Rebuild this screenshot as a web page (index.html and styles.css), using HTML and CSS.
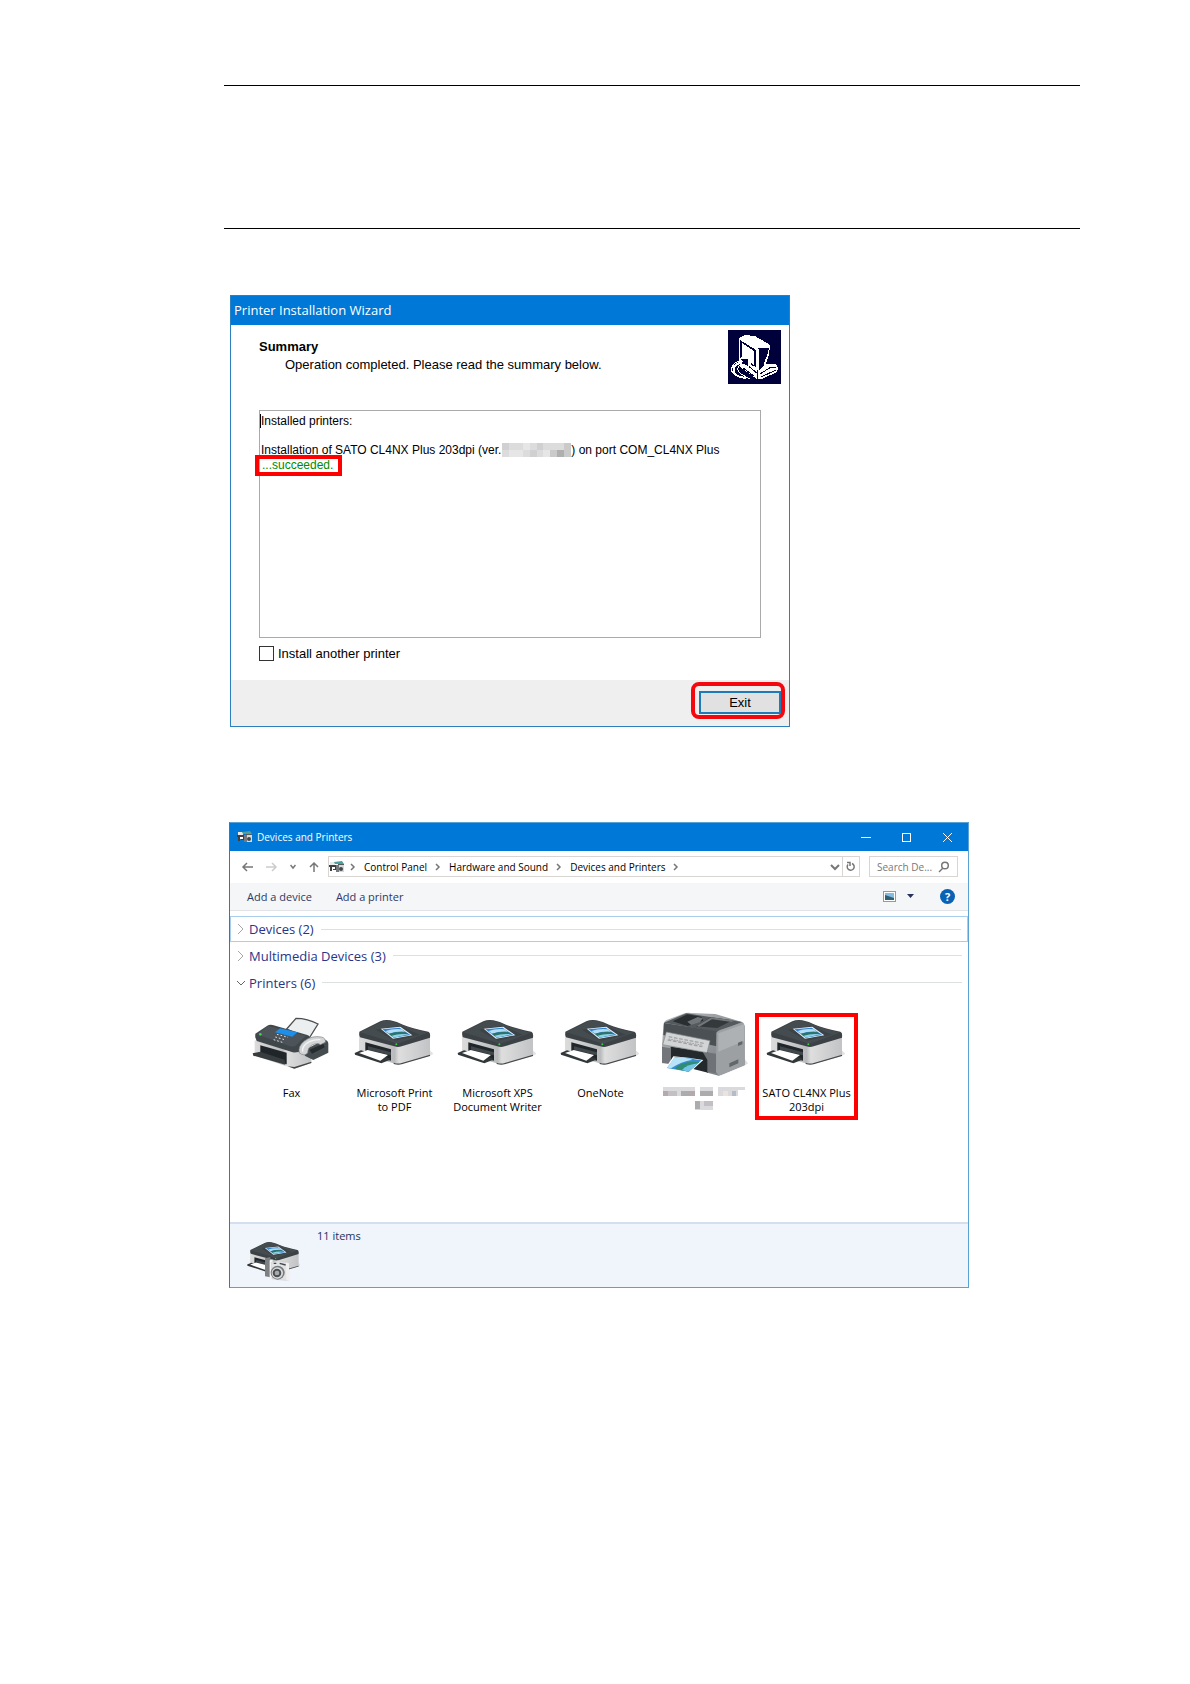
FILE: index.html
```html
<!DOCTYPE html>
<html lang="en">
  <head>
    <meta charset="utf-8">
    <title>Printer Installation</title>
    <link rel="stylesheet" href="styles.css">
  </head>
  <body>
    <!-- shared drawings -->
    <svg class="sprites" width="0" height="0" aria-hidden="true">
      <defs>
        <linearGradient id="side" x1="0" x2="1" y1="0" y2="0">
          <stop offset="0" stop-color="#dcdcdc" />
          <stop offset="0.5" stop-color="#b9bbbc" />
          <stop offset="0.56" stop-color="#dedede" />
          <stop offset="1" stop-color="#c2c3c5" />
        </linearGradient>
        <linearGradient id="metal" x1="0" x2="1" y1="0" y2="1">
          <stop offset="0" stop-color="#b5b8bb" />
          <stop offset="1" stop-color="#73777b" />
        </linearGradient>
      </defs>
      <symbol id="printer" viewBox="380 50 240 150">
        <path d="M520 192L612 166L621 160L610 150Z" fill="#e2e2e2" />
        <path d="M398 106L508 136L611 108V166L526 190Q515 194 502 189L398 160Z" fill="url(#side)" />
        <path d="M502 187Q515 192 526 188L611 163V167L526 192Q515 195 502 191Z" fill="#45494c" />
        <path d="M399 94L462 63Q475 57 492 60Q512 64 530 73Q555 83 606 94Q613 96 611 112L526 138Q515 142 504 138L401 111Q397 104 399 94Z" fill="#3b4145" />
        <path d="M401 96L464 65Q476 60 492 62Q511 66 529 75Q554 85 604 97L521 128Q514 130 506 128Z" fill="#454c50" />
        <path d="M448 88L520 76L580 103L506 121Z" fill="#3c4246" />
        <path d="M417 126L494 147V181L417 160Z" fill="#20262a" />
        <path d="M425 138L494 156V165L425 148Z" fill="#41484c" />
        <path d="M385 158L404 150L490 174V179L465 189L386 163Z" fill="#32373a" />
        <path d="M398 158L424 149L485 164L462 181Z" fill="#fff" />
        <path d="M463 85L522 79L558 105L500 115Z" fill="#e8f3fa" />
        <path d="M468 87L520 82L552 104L502 112Z" fill="#2f83cf" />
        <path d="M478 92Q500 84 526 87L536 94Q510 92 488 100Z" fill="#b4dcf5" />
        <path d="M488 100Q512 92 537 96L547 102L502 112Z" fill="#2d7466" />
        <path d="M496 106Q520 98 549 102L502 112Z" fill="#8ed0ef" />
        <circle cx="510" cy="132" r="3" fill="#39c840" />
      </symbol>
      <symbol id="devices" viewBox="0 0 16 12">
        <path d="M1 1H6V4H1Z" fill="#e8e8e8" />
        <path d="M5 1L13 0L15 3H6Z" fill="#4d9e9e" />
        <path d="M0 4H7V9H4V6H3V10H1V6H0Z" fill="#3d4043" />
        <path d="M3 6H6V8H3Z" fill="#fff" />
        <path d="M7 4H10V11H7Z" fill="#75797c" />
        <path d="M10 4H15V11H10Z" fill="#d8d8d8" />
        <circle cx="12" cy="8" r="2" fill="#45484b" />
        <path d="M9 3H15V4H9Z" fill="#565a5c" />
      </symbol>
      <symbol id="chevron" viewBox="0 0 8 8">
        <path d="M2 1L5 4L2 7" fill="none" stroke="currentColor" stroke-width="1.500" />
      </symbol>
    </svg>

    <main class="page">
      <div class="note"></div>

      <section class="wizard" aria-label="Printer Installation Wizard">
        <h1 class="wizard-title">Printer Installation Wizard</h1>
        <div class="wizard-body">
          <header class="summary">
            <div>
              <h2>Summary</h2>
              <p>Operation completed. Please read the summary below.</p>
            </div>
            <svg class="setup-icon" viewBox="0 0 53 54" shape-rendering="crispEdges">
              <rect width="53" height="54" fill="#00003a" />
              <path d="M11 8L17 5L27 6L42 15L41 25L38 34L48 34L50 38L49 42L34 49L29 49L12 37L11 28Z" fill="#fff" />
              <path d="M30 18L41 17L40 24L36 35L31 40Z" fill="#00003a" />
              <path d="M12 10L28 20V37L23 35V26H14L12 28Z" fill="#00003a" />
              <path d="M14 13L26 21V35L23 33V26H14Z" fill="#fff" />
              <path d="M32 44L43 37L48 37M33 47L48 40M29 40V49M15 38L26 46M18 34L30 44" stroke="#00003a" stroke-width="1" fill="none" />
              <path d="M30 18L42 17M30 19V40M36 35L40 24" stroke="#fff" fill="none" />
              <path d="M20 48C6 48 0 41 6 34Q9 31 14 31L11 28H20V37L16 34C9 35 8 40 13 44Z" fill="#00003a" stroke="#fff" stroke-width="1" />
              <path d="M18 48C8 47 4 43 6 37Q8 33 14 33" stroke="#fff" stroke-width="2" fill="none" />
            </svg>
          </header>
          <div class="log">
            <p><span class="caret">Installed printers:</span></p>
            <p class="log-entry">
              Installation of SATO CL4NX Plus 203dpi (ver.
              <svg width="69" height="14" viewBox="0 0 10 2" preserveAspectRatio="none" shape-rendering="crispEdges">
                <path d="M0 0H10V2H0Z" fill="#dcdcdc" />
                <path d="M0 0H1V1H0ZM4 1H5V2H4ZM5 0H6V1H5Z" fill="#d0d0d3" />
                <path d="M1 1H3V2H1ZM6 1H7V2H6ZM3 0H4V1H3Z" fill="#e6e6e6" />
                <path d="M8 1H9V2H8Z" fill="#b0afb0" />
                <path d="M9 0H10V2H9ZM7 1H8V2H7Z" fill="#cbcacb" />
              </svg>
              ) on port COM_CL4NX Plus
            </p>
            <p class="result"><span class="callout">...succeeded.</span></p>
          </div>
          <label class="again"><input type="checkbox"> Install another printer</label>
        </div>
        <footer class="wizard-footer">
          <span class="exit-callout"><button type="button" class="exit">Exit</button></span>
        </footer>
      </section>

      <section class="explorer" aria-label="Devices and Printers">
        <header class="titlebar">
          <svg width="16" height="12"><use href="#devices" /></svg>
          <h1>Devices and Printers</h1>
          <div class="window-buttons">
            <button type="button" aria-label="Minimize">
              <svg width="11" height="11"><path d="M1 5.500H11" stroke="#fff" /></svg>
            </button>
            <button type="button" aria-label="Maximize">
              <svg width="11" height="11"><rect x="1.500" y="1.500" width="8" height="8" fill="none" stroke="#fff" /></svg>
            </button>
            <button type="button" aria-label="Close">
              <svg width="11" height="11"><path d="M1 1L10 10M10 1L1 10" stroke="#fff" /></svg>
            </button>
          </div>
        </header>

        <nav class="navbar">
          <div class="history">
            <button type="button" aria-label="Back">
              <svg width="12" height="10"><path d="M12 5H2M6 1L2 5L6 9" fill="none" stroke="#777" stroke-width="1.500" /></svg>
            </button>
            <button type="button" aria-label="Forward">
              <svg width="12" height="10"><path d="M0 5H10M6 1L10 5L6 9" fill="none" stroke="#ccc" stroke-width="1.500" /></svg>
            </button>
            <button type="button" aria-label="Recent locations">
              <svg width="6" height="10"><path d="M0.500 3L3 6L5.500 3" fill="none" stroke="#777" stroke-width="1.500" /></svg>
            </button>
            <button type="button" aria-label="Up">
              <svg width="10" height="11"><path d="M5 11V2M1 6L5 2L9 6" fill="none" stroke="#777" stroke-width="1.500" /></svg>
            </button>
          </div>
          <div class="address">
            <svg class="place" width="16" height="12"><use href="#devices" /></svg>
            <svg class="sep" width="8" height="8"><use href="#chevron" /></svg>
            <a href="#">Control Panel</a>
            <svg class="sep" width="8" height="8"><use href="#chevron" /></svg>
            <a href="#">Hardware and Sound</a>
            <svg class="sep" width="8" height="8"><use href="#chevron" /></svg>
            <a href="#">Devices and Printers</a>
            <svg class="sep" width="8" height="8"><use href="#chevron" /></svg>
            <button type="button" class="drop" aria-label="Previous locations">
              <svg width="10" height="8"><path d="M1 2L5 6L9 2" fill="none" stroke="#777" stroke-width="2" /></svg>
            </button>
            <button type="button" class="refresh" aria-label="Refresh">
              <svg width="10" height="11"><path d="M6 2.500A3.500 3.500 0 1 1 2 3.500M1 1.500H4V5" fill="none" stroke="#777" stroke-width="1.500" /></svg>
            </button>
          </div>
          <div class="search">
            <input type="text" placeholder="Search De..." aria-label="Search">
            <svg width="12" height="12"><circle cx="7" cy="4.500" r="3.300" fill="none" stroke="#777" stroke-width="1.500" /><path d="M5 7L1 11" stroke="#777" stroke-width="1.500" /></svg>
          </div>
        </nav>

        <div class="toolbar">
          <button type="button">Add a device</button>
          <button type="button">Add a printer</button>
          <div class="toolbar-right">
            <button type="button" aria-label="Change view">
              <svg width="13" height="11"><rect x="0.500" y="0.500" width="12" height="10" fill="#fff" stroke="#999" /><path d="M2 2H11V7H2Z" fill="#83bce2" /><path d="M2 4L11 7V9H2Z" fill="#2f6073" /></svg>
            </button>
            <button type="button" aria-label="More view options">
              <svg width="8" height="5"><path d="M1 0H8L4.500 4Z" fill="#26315e" /></svg>
            </button>
            <button type="button" class="help" aria-label="Help">?</button>
          </div>
        </div>

        <div class="groups">
          <button type="button" class="group selected">
            <svg width="8" height="12"><path d="M1 1L6 6L1 11" fill="none" stroke="#a6a6a6" /></svg>
            <span>Devices (2)</span>
          </button>
          <button type="button" class="group">
            <svg width="8" height="12"><path d="M1 1L6 6L1 11" fill="none" stroke="#a6a6a6" /></svg>
            <span>Multimedia Devices (3)</span>
          </button>
          <button type="button" class="group">
            <svg width="8" height="12"><path d="M0 4L4 8L8 4" fill="none" stroke="#666" /></svg>
            <span>Printers (6)</span>
          </button>

          <ul class="printers">
            <li>
              <a href="#">
                <svg class="fax" viewBox="78 40 240 174">
                  <path d="M182 88L210 56Q245 56 276 73L248 118Z" fill="#eceff0" stroke="#4b4f52" stroke-width="4" />
                  <path d="M86 122L200 154L236 140L256 160V190L205 207L86 168Z" fill="url(#side)" />
                  <path d="M88 102L124 78Q130 74 140 76L244 106Q255 110 250 120L232 150Q215 160 200 158L92 124Q85 112 88 102Z" fill="#40474b" />
                  <path d="M93 104L127 79L240 108L208 139Q200 142 190 139Z" fill="#4d5459" />
                  <path d="M103 137L182 159V194L103 172Z" fill="#1f2528" />
                  <path d="M80 161L103 156L176 180L178 195L160 190L82 168Z" fill="#373c3f" />
                  <path d="M185 200L205 207L256 190V186L205 202Z" fill="#444" />
                  <path d="M162 86L214 98L199 111L147 98Z" fill="#1d8fe8" />
                  <path d="M153 104L186 113M148 112L179 121M143 120L172 129" stroke="#e2e2e2" stroke-width="3" stroke-dasharray="5 6" />
                  <path d="M246 146L294 120Q306 120 307 132V159L262 181L236 168Z" fill="#454c50" />
                  <path d="M250 150L292 132L296 143L258 162Z" fill="#252b2e" />
                  <path d="M220 160Q215 140 235 124Q258 107 286 112Q300 115 298 128L283 135Q275 128 258 136Q245 144 245 160Q235 171 220 160Z" fill="#d2d5d6" stroke="#7d8183" stroke-width="2" />
                  <path d="M230 156Q227 138 250 126Q265 119 283 120" fill="none" stroke="#f4f4f4" stroke-width="4" />
                  <circle cx="103" cy="104" r="4" fill="#39d840" />
                </svg>
                <span>Fax</span>
              </a>
            </li>
            <li>
              <a href="#">
                <svg class="art"><use href="#printer" /></svg>
                <span>Microsoft Print<br>to PDF</span>
              </a>
            </li>
            <li>
              <a href="#">
                <svg class="art"><use href="#printer" /></svg>
                <span>Microsoft XPS<br>Document Writer</span>
              </a>
            </li>
            <li>
              <a href="#">
                <svg class="art"><use href="#printer" /></svg>
                <span>OneNote</span>
              </a>
            </li>
            <li>
              <a href="#" aria-label="Printer">
                <svg class="office" viewBox="66 33 264 198">
                  <path d="M245 228L318 198L330 190L318 175Z" fill="#ddd" />
                  <path d="M76 78Q76 65 86 60L142 39Q150 37 160 39L232 42L312 66Q320 70 320 82V195L242 227L208 218V190L72 190V140Z" fill="url(#metal)" />
                  <path d="M78 68L145 40L312 66L238 96Z" fill="#555a5e" />
                  <path d="M78 69L238 94L236 139L76 105Z" fill="#4b5054" />
                  <path d="M235 98Q238 93 246 90L311 68Q320 70 320 82V195L242 227L234 215Z" fill="#9da0a3" />
                  <path d="M241 100L318 73V123L241 155Z" fill="#aeb1b4" />
                  <path d="M104 64L148 43L190 50L196 62L149 78Z" fill="#292e31" />
                  <path d="M148 65L179 51L194 55L186 67L160 75Z" fill="#71767a" />
                  <path d="M174 79L218 52L284 61L238 84Z" fill="#34393c" />
                  <path d="M177 77L220 52L286 61L282 66L222 58L184 80Z" fill="#74787b" />
                  <path d="M98 140L210 157V218L98 190Z" fill="#24292c" />
                  <path d="M72 140L98 145V193L72 188Z" fill="#73777b" />
                  <path d="M194 155L234 161V220L208 216V180Z" fill="#6f7377" />
                  <path d="M85 96L216 122L207 158L74 134Z" fill="#d2d4d5" stroke="#84888b" stroke-width="2" />
                  <path d="M92 110L197 130M89 120L193 140" stroke="#a0a4a6" stroke-width="4" stroke-dasharray="11 5" />
                  <path d="M92 117L195 136" stroke="#888" stroke-width="2" stroke-dasharray="5 3" />
                  <path d="M106 169Q150 172 196 180L154 218L81 207Z" fill="#fff" />
                  <path d="M111 171Q150 174 190 181L152 215L87 204Z" fill="#368ed7" />
                  <path d="M109 172Q150 173 163 179Q130 184 99 205L88 203Z" fill="#b9e4f8" />
                  <path d="M110 206Q130 181 184 186L152 215Z" fill="#318c75" />
                  <path d="M132 210Q145 194 181 190L152 215Z" fill="#73c5e8" />
                  <path d="M300 128L313 123V133L300 138ZM274 190L301 178V190L274 202Z" fill="#62676a" />
                </svg>
                <svg width="82" height="24" viewBox="0 0 82 24" shape-rendering="crispEdges">
                  <path d="M0 0H32V9H0ZM37 0H50V9H37ZM55 0H82V3H75V9H55ZM32 14H50V23H32Z" fill="#dad9db" />
                  <path d="M0 4H5V9H0ZM27 4H32V9H27Z" fill="#b5a9ae" />
                  <path d="M18 4H27V9H18ZM37 4H50V9H37ZM32 14H37V22H32Z" fill="#acacae" />
                  <path d="M5 4H14V9H5ZM41 14H50V19H41Z" fill="#c3bfc5" />
                  <path d="M60 4H65V9H60Z" fill="#ece3dc" />
                  <path d="M69 4H73V9H69Z" fill="#b5bcc6" />
                </svg>
              </a>
            </li>
            <li class="highlighted">
              <a href="#">
                <svg class="art"><use href="#printer" /></svg>
                <span>SATO CL4NX Plus<br>203dpi</span>
              </a>
            </li>
          </ul>
        </div>

        <footer class="status">
          <svg width="54" height="42" viewBox="80 85 162 126">
            <svg x="80" y="84" width="164" height="104"><use href="#printer" /></svg>
            <path d="M137 140L153 136V197L137 194Z" fill="#7d8184" />
            <path d="M151 146L160 144V204L151 198Z" fill="#f5f5f5" />
            <path d="M156 152L176 147L208 154V207L158 202Z" fill="#e2e3e4" stroke="#bbb" />
            <path d="M200 152L209 155V208L201 206Z" fill="#efefef" />
            <circle cx="175" cy="183" r="21" fill="#777b7d" />
            <circle cx="174" cy="184" r="17" fill="#dedede" />
            <circle cx="173" cy="184" r="13" fill="#4c5053" />
            <circle cx="173" cy="184" r="7" fill="#a8abad" />
            <path d="M163 155H171M181 155L199 160" stroke="#44484b" stroke-width="4" />
          </svg>
          <p>11 items</p>
        </footer>
      </section>
    </main>
  </body>
</html>
```

FILE: styles.css
```css
* {
  box-sizing: border-box;
}

body {
  margin: 0;
  background: #fff;
  color: #000;
  font-family: "Open Sans", "Noto Sans", sans-serif;
  font-size: 11px;
}

h1,
h2,
p,
ul {
  margin: 0;
  padding: 0;
}

button {
  padding: 0;
  border: none;
  background: none;
  color: inherit;
  font: inherit;
}

a {
  color: inherit;
  text-decoration: none;
}

svg {
  display: block;
  flex: none;
}

.sprites {
  position: absolute;
}

.page {
  padding: 85px 110px 0 224px;
}

.note {
  height: 144px;
  margin-bottom: 66px;
  border-top: 1px solid #000;
  border-bottom: 1px solid #000;
}

/* wizard */
.wizard {
  max-width: 560px;
  margin-left: 6px;
  border: 1px solid #2c80bd;
  font-family: "Liberation Sans", Arial, sans-serif;
  font-size: 13px;
}

.wizard-title {
  padding-left: 3px;
  background: #0078d7;
  color: #fff;
  font-family: "Open Sans", "Noto Sans", sans-serif;
  font-size: 13px;
  font-weight: 400;
  line-height: 29px;
}

.wizard-body {
  padding: 5px 28px 19px;
}

.summary {
  display: flex;
  justify-content: space-between;
  margin-right: -20px;
  padding-bottom: 26px;
}

.summary h2 {
  padding-top: 8px;
  font-size: 13px;
  line-height: 18px;
}

.summary p {
  padding-left: 26px;
  line-height: 18px;
}

.setup-icon {
  width: 53px;
  height: 54px;
}

.log {
  height: 228px;
  padding: 3px 1px;
  border: 1px solid #aaa;
  font-size: 12px;
  line-height: 15px;
}

.caret {
  box-shadow: -1px 0 #000;
}

.log-entry {
  display: flex;
  margin-top: 14px;
  white-space: nowrap;
}

.log-entry svg {
  margin-left: 1px;
}

.result {
  color: #008a00;
}

.callout {
  display: inline-block;
  margin: -4px 0 0 -6px;
  padding: 0 5px 0 3px;
  border: 4px solid #f00;
  line-height: 13px;
}

.again {
  display: flex;
  align-items: center;
  gap: 4px;
  margin-top: 8px;
}

.again input {
  appearance: none;
  width: 15px;
  height: 15px;
  margin: 0;
  border: 1px solid #333;
  background: #fff;
}

.wizard-footer {
  display: flex;
  justify-content: flex-end;
  padding: 2px 4px 7px;
  background: #efefef;
}

.exit-callout {
  padding: 5px 0 1px 4px;
  border: 4px solid #f5080d;
  border-radius: 8px;
}

.exit {
  display: block;
  width: 82px;
  height: 23px;
  border: 2px solid #1e7bb8;
  background: #e1e1e1;
}

/* explorer window */
.explorer {
  max-width: 740px;
  margin: 95px 0 0 5px;
  border: 1px solid #59a3d4;
  border-left-color: #1c7fc9;
}

.titlebar {
  display: flex;
  align-items: center;
  gap: 4px;
  height: 28px;
  padding: 0 15px 0 7px;
  background: #0078d7;
  color: #fff;
}

.titlebar h1 {
  font-size: 10px;
  font-weight: 400;
}

.window-buttons {
  display: flex;
  gap: 30px;
  margin-left: auto;
}

.navbar {
  display: flex;
  gap: 9px;
  height: 32px;
  padding: 5px 10px 6px 11px;
  font-size: 10px;
}

.history {
  display: flex;
  align-items: center;
  justify-content: space-between;
  width: 78px;
}

.address {
  display: flex;
  flex: 1;
  align-items: center;
  gap: 7px;
  border: 1px solid #d9d5d3;
  white-space: nowrap;
}

.place {
  margin-right: -3px;
}

.sep {
  color: #777;
}

.drop {
  margin-left: auto;
}

.refresh {
  display: flex;
  align-items: center;
  align-self: stretch;
  margin-left: -5px;
  padding: 0 3px;
  border-left: 1px solid #d9d5d3;
}

.search {
  display: flex;
  align-items: center;
  width: 89px;
  padding: 0 7px;
  border: 1px solid #d9d5d3;
}

.search input {
  flex: 1;
  min-width: 0;
  padding: 0;
  border: none;
  outline: none;
  background: none;
  font: inherit;
}

.search input::placeholder {
  color: #777;
}

.toolbar {
  display: flex;
  align-items: center;
  gap: 24px;
  height: 28px;
  padding: 0 13px 0 17px;
  border-bottom: 1px solid #e1e3e6;
  background: #f4f6f8;
  color: #2c3a66;
}

.toolbar-right {
  display: flex;
  align-items: center;
  gap: 10px;
  margin-left: auto;
}

.help {
  width: 15px;
  height: 15px;
  margin-left: 16px;
  border-radius: 50%;
  background: #0a62b5;
  color: #fff;
  font-weight: 700;
  line-height: 15px;
}

.groups {
  padding-top: 5px;
}

.group {
  display: flex;
  align-items: center;
  gap: 4px;
  width: 100%;
  height: 27px;
  padding: 0 6px 0 7px;
  color: #28348a;
  font-size: 13px;
}

.group::after {
  flex: 1;
  height: 1px;
  margin-left: 3px;
  background: #dde0e0;
  content: "";
}

.selected {
  height: 26px;
  padding-left: 6px;
  border: 1px solid #a9cdec;
}

.printers {
  display: grid;
  grid-template-columns: repeat(auto-fill, 103px);
  min-height: 226px;
  padding: 17px 0 0 10px;
  list-style: none;
}

.printers li {
  height: 107px;
  border: 4px solid transparent;
}

.printers a {
  display: flex;
  flex-direction: column;
  align-items: center;
  line-height: 14px;
  text-align: center;
  white-space: nowrap;
}

.art {
  width: 80px;
  height: 50px;
  margin: 0 4px 19px 0;
}

.fax {
  width: 80px;
  height: 58px;
  margin: -4px 0 15px;
}

.office {
  width: 88px;
  height: 66px;
  margin: -6px 0 10px;
}

.printers .highlighted {
  border-color: #f00;
}

.status {
  display: flex;
  gap: 17px;
  height: 65px;
  padding: 2px 16px;
  border-top: 2px solid #d5deee;
  background: #f0f4fb;
  color: #26315e;
}

.status svg {
  margin-top: 14px;
}

.status p {
  line-height: 20px;
}
```
